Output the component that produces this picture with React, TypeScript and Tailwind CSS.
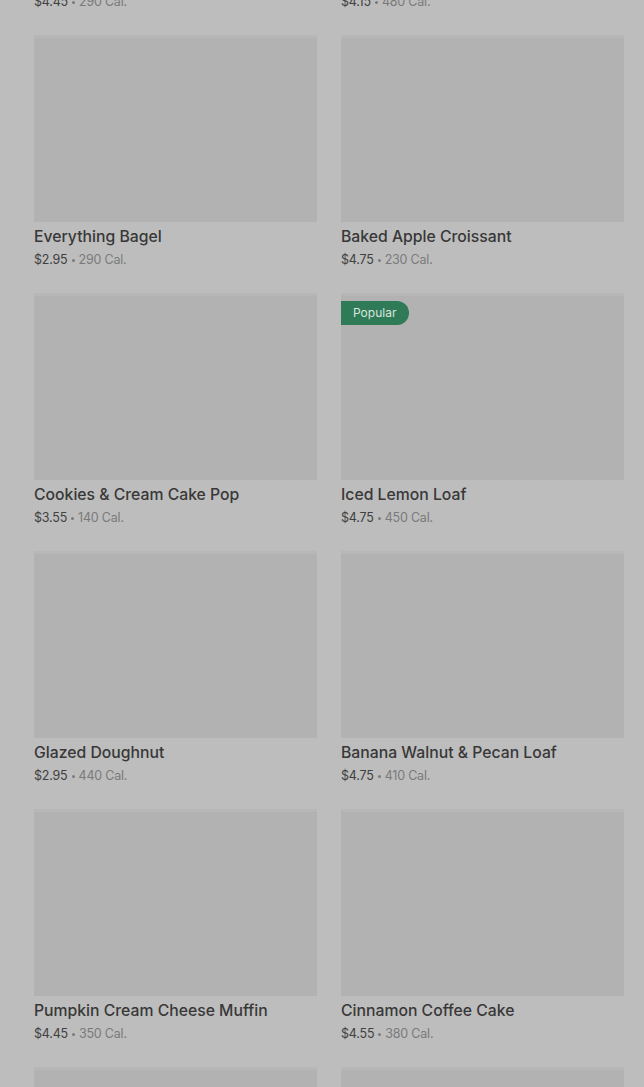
import React from "react";

type Item = { name: string; price: string; cal: string; popular?: boolean };

const items: Item[] = [
  { name: "Blueberry Muffin", price: "$4.45", cal: "290 Cal." },
  { name: "Butter Croissant", price: "$4.15", cal: "480 Cal." },
  { name: "Everything Bagel", price: "$2.95", cal: "290 Cal." },
  { name: "Baked Apple Croissant", price: "$4.75", cal: "230 Cal." },
  { name: "Cookies & Cream Cake Pop", price: "$3.55", cal: "140 Cal." },
  { name: "Iced Lemon Loaf", price: "$4.75", cal: "450 Cal.", popular: true },
  { name: "Glazed Doughnut", price: "$2.95", cal: "440 Cal." },
  { name: "Banana Walnut & Pecan Loaf", price: "$4.75", cal: "410 Cal." },
  { name: "Pumpkin Cream Cheese Muffin", price: "$4.45", cal: "350 Cal." },
  { name: "Cinnamon Coffee Cake", price: "$4.55", cal: "380 Cal." },
  { name: "Chocolate Croissant", price: "$4.25", cal: "300 Cal." },
  { name: "Plain Bagel", price: "$2.75", cal: "280 Cal." },
];

function Card({ item }: { item: Item }) {
  return (
    <div className="flex flex-col">
      <div className="relative h-[187px] w-full bg-[#b2b2b2]">
        <div className="h-[3px] w-full bg-[#b7b7b7]" />
        {item.popular && (
          <span className="absolute left-0 top-[8px] flex h-[24px] items-center rounded-r-full bg-[#2f7a57] pl-[12px] pr-[13px] text-[12px] text-[#d9e6df]">
            Popular
          </span>
        )}
      </div>
      <div className="mt-[5px] text-[15.75px] leading-[20px] font-medium text-[#383838]">
        {item.name}
      </div>
      <div className="mt-[4px] flex items-center text-[12.5px] leading-[18px] tracking-[-0.2px]">
        <span className="text-[#404040]">{item.price}</span>
        <span className="mx-[4px] h-[3px] w-[3px] rounded-full bg-[#7a7a7a]" />
        <span className="text-[#7a7a7a]">{item.cal}</span>
      </div>
    </div>
  );
}

export default function App() {
  return (
    <div
      className="h-[1087px] overflow-hidden bg-[#bdbdbd]"
      style={{ fontFamily: "Inter, 'Noto Sans', sans-serif" }}
    >
      <div className="-mt-[223px] grid grid-cols-2 gap-x-[24px] gap-y-[24px] pl-[34px] pr-[20px]">
        {items.map((item) => (
          <Card key={item.name} item={item} />
        ))}
      </div>
    </div>
  );
}
